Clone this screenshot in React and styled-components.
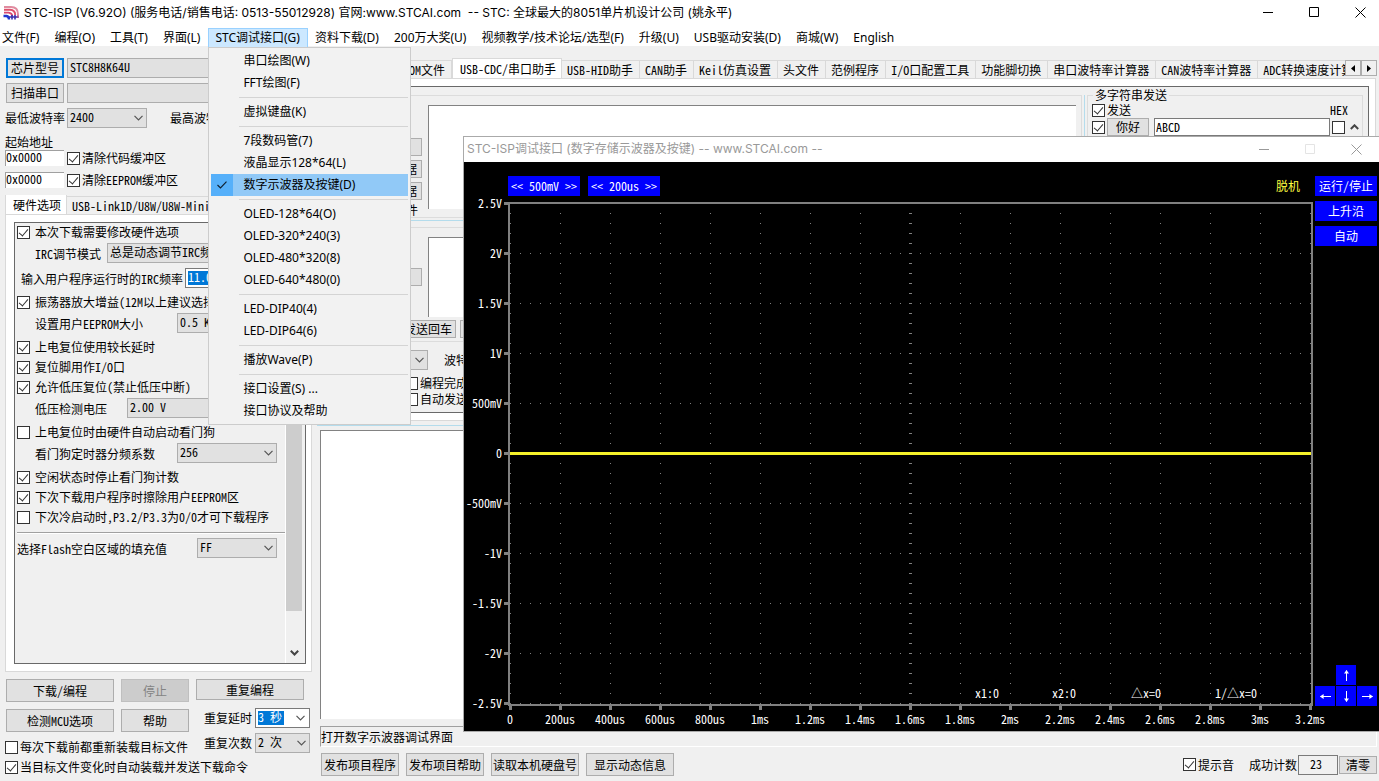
import React from "react";
import styled, { createGlobalStyle, css } from "styled-components";

const MENUS = [
  "文件(F)",
  "编程(O)",
  "工具(T)",
  "界面(L)",
  "STC调试接口(G)",
  "资料下载(D)",
  "200万大奖(U)",
  "视频教学/技术论坛/选型(F)",
  "升级(U)",
  "USB驱动安装(D)",
  "商城(W)",
  "English"
];

const DEBUG_MENU = [
  ["串口绘图(W)", "FFT绘图(F)"],
  ["虚拟键盘(K)"],
  ["7段数码管(7)", "液晶显示128*64(L)", "数字示波器及按键(D)"],
  ["OLED-128*64(O)", "OLED-320*240(3)", "OLED-480*320(8)", "OLED-640*480(0)"],
  ["LED-DIP40(4)", "LED-DIP64(6)"],
  ["播放Wave(P)"],
  ["接口设置(S) ...", "接口协议及帮助"]
];

const TOOL_TABS = [
  "程序文件",
  "EEPROM文件",
  "USB-CDC/串口助手",
  "USB-HID助手",
  "CAN助手",
  "Keil仿真设置",
  "头文件",
  "范例程序",
  "I/O口配置工具",
  "功能脚切换",
  "串口波特率计算器",
  "CAN波特率计算器",
  "ADC转换速度计算器"
];

const VOLTS = ["2.5V", "2V", "1.5V", "1V", "500mV", "0", "-500mV", "-1V", "-1.5V", "-2V", "-2.5V"];

const TIMES = [
  "0", "200us", "400us", "600us", "800us", "1ms", "1.2ms", "1.4ms", "1.6ms",
  "1.8ms", "2ms", "2.2ms", "2.4ms", "2.6ms", "2.8ms", "3ms", "3.2ms"
];

const Check = ({ id, label, checked }) => (
  <CheckLabel htmlFor={id}>
    <CheckInput id={id} type="checkbox" defaultChecked={checked} />
    {label}
  </CheckLabel>
);

const Chevron = () => (
  <ChevronSvg viewBox="0 0 9 6" width="9" height="6" aria-hidden="true">
    <path d="M0.5 0.8 L4.5 4.8 L8.5 0.8" fill="none" stroke="#555" strokeWidth="1.2" />
  </ChevronSvg>
);

const Select = ({ id, value, width, label }) => (
  <SelectBox $width={width}>
    <NativeSelect id={id} defaultValue={value} aria-label={label}>
      <option>{value}</option>
    </NativeSelect>
    <Chevron />
  </SelectBox>
);

const Combo = ({ id, value, width, textWidth }) => (
  <ComboBox $width={width}>
    <MarkedInput id={id} type="text" defaultValue={value} $width={textWidth} />
    <Chevron />
  </ComboBox>
);

const Field = ({ id, label, labelWidth, indent = 20, width, value }) => (
  <FieldRow>
    <FieldLabel htmlFor={id} $width={labelWidth} $indent={indent}>
      {label}
    </FieldLabel>
    <Select id={id} value={value} width={width} />
  </FieldRow>
);

const Logo = () => (
  <svg width="16" height="14" viewBox="0 0 16 14" aria-hidden="true">
    <g fill="none" strokeWidth="1.9">
      <path d="M1 1 H8 Q15 1 15 8 V9" stroke="#e08ca0" />
      <path d="M1 3.8 H7 Q12.2 4 12.2 9" stroke="#e0506c" />
      <path d="M1 6.6 H5.5 Q9 7 9.2 10" stroke="#d84a70" />
      <path d="M0.5 10 H3.5 Q6 10.5 6 13.5" stroke="#2038d0" strokeWidth="2.4" />
      <path d="M9 9 V13.5 M12 9 V13.5 M6 11 H15.5" stroke="#3a2fae" strokeWidth="1.6" />
      <path d="M15 9 V12" stroke="#b04880" strokeWidth="1.4" />
    </g>
  </svg>
);

const WindowButtons = () => (
  <>
    <WindowButton type="button" aria-label="最小化">
      <svg width="11" height="11" viewBox="0 0 11 11">
        <path d="M0 5.5 H10" stroke="currentColor" />
      </svg>
    </WindowButton>
    <WindowButton type="button" aria-label="最大化">
      <svg width="11" height="11" viewBox="0 0 11 11">
        <path d="M0.5 0.5 H9.5 V9.5 H0.5 Z" fill="none" stroke="currentColor" />
      </svg>
    </WindowButton>
    <WindowButton type="button" aria-label="关闭">
      <svg width="11" height="11" viewBox="0 0 11 11">
        <path d="M0.5 0.5 L10.5 10.5 M10.5 0.5 L0.5 10.5" stroke="currentColor" />
      </svg>
    </WindowButton>
  </>
);

const DebugMenu = () => (
  <Dropdown>
    {DEBUG_MENU.map((group, i) => (
      <MenuGroup key={i}>
        {group.map(item => {
          const active = item.startsWith("数字示波器");
          return (
            <MenuItem key={item} type="button" $active={active}>
              <MenuTick $active={active}>
                {active && (
                  <svg width="10" height="8" viewBox="0 0 10 8">
                    <path d="M0.5 4 L3.5 7 L9.5 0.7" fill="none" stroke="#123" strokeWidth="1.2" />
                  </svg>
                )}
              </MenuTick>
              {item}
            </MenuItem>
          );
        })}
      </MenuGroup>
    ))}
  </Dropdown>
);

const Hardware = () => (
  <HardwarePage>
    <Sunken>
      <Options>
        <Check id="modify" label="本次下载需要修改硬件选项" checked />
        <Field id="irc" label="IRC调节模式" labelWidth={92} width={170} value="总是动态调节IRC频率" />
        <FieldRow $gap={5}>
          <FieldLabel htmlFor="freq" $width={170} $indent={6}>
            输入用户程序运行时的IRC频率
          </FieldLabel>
          <Combo id="freq" value="11.0592" width={92} textWidth={42} />
        </FieldRow>
        <OptionGroup>
          <Check id="gain" label="振荡器放大增益(12M以上建议选择)" checked />
        </OptionGroup>
        <Field id="eeprom" label="设置用户EEPROM大小" labelWidth={162} width={100} value="0.5 K" />
        <OptionGroup>
          <Check id="delay" label="上电复位使用较长延时" checked />
          <Check id="reset" label="复位脚用作I/O口" checked />
          <Check id="lowv" label="允许低压复位(禁止低压中断)" checked />
        </OptionGroup>
        <Field id="volt" label="低压检测电压" labelWidth={112} width={150} value="2.00 V" />
        <OptionGroup>
          <Check id="dog" label="上电复位时由硬件自动启动看门狗" />
        </OptionGroup>
        <Field id="div" label="看门狗定时器分频系数" labelWidth={162} width={100} value="256" />
        <OptionGroup>
          <Check id="idle" label="空闲状态时停止看门狗计数" checked />
          <Check id="erase" label="下次下载用户程序时擦除用户EEPROM区" checked />
          <Check id="cold" label="下次冷启动时,P3.2/P3.3为0/0才可下载程序" />
        </OptionGroup>
        <Rule />
        <Field
          id="fill"
          label="选择Flash空白区域的填充值"
          labelWidth={182}
          indent={2}
          width={80}
          value="FF"
        />
      </Options>
      <ScrollBar>
        <ScrollThumb />
        <svg width="9" height="6" viewBox="0 0 9 6" aria-hidden="true">
          <path d="M0.8 0.8 L4.5 4.5 L8.2 0.8" fill="none" stroke="#444" strokeWidth="2" />
        </svg>
      </ScrollBar>
    </Sunken>
  </HardwarePage>
);

const Downloads = () => (
  <DownloadArea>
    <DownloadLeft>
      <ButtonGrid>
        <Button type="button">下载/编程</Button>
        <Button type="button" disabled>停止</Button>
        <Button type="button">检测MCU选项</Button>
        <Button type="button">帮助</Button>
      </ButtonGrid>
      <Check id="reload" label="每次下载前都重新装载目标文件" />
      <Check id="autoload" label="当目标文件变化时自动装载并发送下载命令" checked />
    </DownloadLeft>
    <DownloadRight>
      <RepeatButton type="button">重复编程</RepeatButton>
      <RepeatRow>
        <label htmlFor="wait">重复延时</label>
        <Combo id="wait" value="3 秒" width={55} textWidth={26} />
      </RepeatRow>
      <RepeatRow>
        <label htmlFor="times">重复次数</label>
        <Select id="times" value="2 次" width={55} />
      </RepeatRow>
    </DownloadRight>
  </DownloadArea>
);

const SerialPage = () => (
  <ToolPage>
    <ToolBody>
      <SerialColumn>
        <SerialGroup>
          <SerialActions $top={42}>
            <SmallButton type="button">清空接收区</SmallButton>
            <SmallButton type="button">保存接收数据</SmallButton>
            <SmallButton type="button">复制接收数据</SmallButton>
            <SaveHint>保存到文件</SaveHint>
          </SerialActions>
          <Buffer aria-label="接收缓冲区" $height={104} />
        </SerialGroup>
        <BlueLine />
        <SerialGroup>
          <SerialActions $top={40}>
            <SmallButton type="button">清空发送区</SmallButton>
          </SerialActions>
          <SendArea>
            <Buffer aria-label="发送缓冲区" $height={80} />
          </SendArea>
        </SerialGroup>
        <SendButtons>
          <SmallButton type="button">发送文件</SmallButton>
          <SmallButton type="button">发送回车</SmallButton>
          <SmallButton type="button">发送数据</SmallButton>
        </SendButtons>
        <PortRow>
          <Select id="port" value="COM1" width={80} label="串口" />
          <span>波特率</span>
          <Select id="baud" value="115200" width={80} label="波特率" />
        </PortRow>
        <PortChecks>
          <Check id="opn" label="编程完成" />
          <Check id="snd" label="自动发送" />
        </PortChecks>
      </SerialColumn>
      <BlueDivider />
      <MultiGroup>
        <legend>多字符串发送</legend>
        <MultiHead>
          <Check id="all" label="发送" checked />
          <span>HEX</span>
        </MultiHead>
        <MultiRow>
          <CheckInput type="checkbox" defaultChecked aria-label="选择第1行" />
          <LineButton type="button">你好</LineButton>
          <BlueDivider />
          <LineInput type="text" defaultValue="ABCD" aria-label="字符串1" />
          <CheckInput type="checkbox" aria-label="HEX" />
          <ScrollUp>
            <svg width="9" height="6" viewBox="0 0 9 6" aria-hidden="true">
              <path d="M0.8 5 L4.5 1.3 L8.2 5" fill="none" stroke="#444" strokeWidth="2" />
            </svg>
          </ScrollUp>
        </MultiRow>
      </MultiGroup>
    </ToolBody>
  </ToolPage>
);

const range = n => Array.from({ length: n }, (_, i) => i);

const Plot = () => (
  <PlotSvg viewBox="0 0 850 533" width="850" height="533" role="img" aria-label="波形">
    <g stroke="#808080" strokeWidth="1" shapeRendering="crispEdges">
      {range(17).map(i => (
        <line key={i} x1={46 + i * 50} x2={46 + i * 50} y1="5" y2="506"
          transform="translate(0.5 0)" strokeDasharray="1 9" />
      ))}
      {range(11).map(i => (
        <line key={i} x1="46" x2="847" y1={5.5 + i * 50} y2={5.5 + i * 50} strokeDasharray="1 9" />
      ))}
      <line x1="446.5" x2="446.5" y1="5" y2="506" strokeWidth="3" strokeDasharray="1 9" />
    </g>
    <rect x="45" y="5" width="803" height="502" fill="none" stroke="#808080" strokeWidth="2" />
    {VOLTS.map((v, i) => (
      <g key={v}>
        <rect x="40" y={4 + i * 50} width="5" height="3" fill="#808080" />
        <text x="38" y={10 + i * 50} textAnchor="end">{v}</text>
      </g>
    ))}
    {TIMES.map((t, i) => (
      <g key={t}>
        <rect x={45 + i * 50} y="507" width="3" height="5" fill="#808080" />
        <text x={46 + i * 50} y="526" textAnchor="middle">{t}</text>
      </g>
    ))}
    <rect x="46" y="254" width="801" height="3" fill="#f5f02a" />
    <text x="511" y="500">x1:0</text>
    <text x="588" y="500">x2:0</text>
    <text x="667" y="500">△x=0</text>
    <text x="751" y="500">1/△x=0</text>
  </PlotSvg>
);

const Scope = () => (
  <ScopeWindow>
    <ScopeTitle>
      <h2>STC-ISP调试接口 (数字存储示波器及按键) -- www.STCAI.com --</h2>
      <WindowButtons />
    </ScopeTitle>
    <ScopeBody>
      <ScopeMain>
        <ScopeBar>
          <BlueButton type="button">{"<< 500mV >>"}</BlueButton>
          <BlueButton type="button">{"<< 200us >>"}</BlueButton>
          <Offline>脱机</Offline>
        </ScopeBar>
        <Plot />
      </ScopeMain>
      <ScopeSide>
        <BlueButton type="button">运行/停止</BlueButton>
        <BlueButton type="button">上升沿</BlueButton>
        <BlueButton type="button">自动</BlueButton>
        <Pad>
          <PadButton type="button" aria-label="上" $area="up"><Arrow turn={0} /></PadButton>
          <PadButton type="button" aria-label="左" $area="left"><Arrow turn={270} /></PadButton>
          <PadButton type="button" aria-label="下" $area="down"><Arrow turn={180} /></PadButton>
          <PadButton type="button" aria-label="右" $area="right"><Arrow turn={90} /></PadButton>
        </Pad>
      </ScopeSide>
    </ScopeBody>
  </ScopeWindow>
);

const Arrow = ({ turn }) => (
  <svg width="11" height="11" viewBox="0 0 11 11">
    <g transform={`rotate(${turn} 5.5 5.5)`}>
      <path d="M5.5 0.5 V11" fill="none" stroke="#fff" />
      <path d="M5.5 0 L8 3.6 H3 Z" fill="#fff" />
    </g>
  </svg>
);

const App = () => (
  <Frame>
    <GlobalStyle />
    <TitleBar>
      <Logo />
      <h1>
        STC-ISP (V6.92O) (服务电话/销售电话: 0513-55012928) 官网:www.STCAI.com&nbsp; -- STC:
        全球最大的8051单片机设计公司 (姚永平)
      </h1>
      <WindowButtons />
    </TitleBar>
    <MenuBar>
      {MENUS.map(name => {
        const open = name.startsWith("STC");
        return (
          <MenuSlot key={name}>
            <MenuButton type="button" $open={open}>{name}</MenuButton>
            {open && <DebugMenu />}
          </MenuSlot>
        );
      })}
    </MenuBar>
    <Body>
      <LeftPane>
        <ChipRow>
          <FocusButton type="button">芯片型号</FocusButton>
          <Select value="STC8H8K64U" width={240} label="芯片型号" />
        </ChipRow>
        <ChipRow>
          <ChipButton type="button">扫描串口</ChipButton>
          <Select value="" width={240} label="串口" />
        </ChipRow>
        <BaudRow>
          <label htmlFor="minb">最低波特率</label>
          <Select id="minb" value="2400" width={80} />
          <MaxLabel htmlFor="maxb">最高波特率</MaxLabel>
          <Select id="maxb" value="115200" width={72} />
        </BaudRow>
        <AddressTitle>起始地址</AddressTitle>
        <AddressRow>
          <AddressInput type="text" defaultValue="0x0000" aria-label="代码起始地址" />
          <Check id="clrcode" label="清除代码缓冲区" checked />
        </AddressRow>
        <AddressRow>
          <AddressInput type="text" defaultValue="0x0000" aria-label="EEPROM起始地址" />
          <Check id="clree" label="清除EEPROM缓冲区" checked />
        </AddressRow>
        <LeftTabs>
          <Tab type="button" $active>硬件选项</Tab>
          <Tab type="button">USB-Link1D/U8W/U8W-Mini脱机</Tab>
        </LeftTabs>
        <Hardware />
        <Downloads />
      </LeftPane>
      <RightPane>
        <TabStrip>
          <TabScroll>
            {TOOL_TABS.map(name => (
              <Tab key={name} type="button" $active={name.startsWith("USB-CDC")}>{name}</Tab>
            ))}
          </TabScroll>
          <StripButton type="button" aria-label="向左">
            <svg width="4" height="7" viewBox="0 0 4 7"><path d="M4 0 V7 L0 3.5 Z" /></svg>
          </StripButton>
          <StripButton type="button" aria-label="向右">
            <svg width="4" height="7" viewBox="0 0 4 7"><path d="M0 0 V7 L4 3.5 Z" /></svg>
          </StripButton>
        </TabStrip>
        <SerialPage />
        <BlueLine />
        <Log aria-label="信息" />
        <Status>打开数字示波器调试界面</Status>
        <Footer>
          <FooterButton type="button">发布项目程序</FooterButton>
          <FooterButton type="button">发布项目帮助</FooterButton>
          <FooterButton type="button" $width={88}>读取本机硬盘号</FooterButton>
          <FooterButton type="button" $width={88}>显示动态信息</FooterButton>
          <Counter>
            <Check id="beep" label="提示音" checked />
            <CountLabel htmlFor="count">成功计数</CountLabel>
            <CountInput id="count" type="text" defaultValue="23" />
            <ClearButton type="button">清零</ClearButton>
          </Counter>
        </Footer>
      </RightPane>
    </Body>
    <Scope />
  </Frame>
);

export default App;

const GlobalStyle = createGlobalStyle`
  * {
    box-sizing: border-box;
  }
  body {
    --song: "Noto Sans Mono CJK SC", "Noto Sans CJK SC", monospace;
    --ui: "Noto Sans", "Noto Sans CJK SC", sans-serif;
    --caption: Inter, "Noto Sans CJK SC", sans-serif;
    background: #f0f0f0;
    color: #000;
    font: 12px/16px var(--song);
    margin: 0;
  }
  button, input, select, textarea {
    color: inherit;
    font: inherit;
    margin: 0;
    white-space: nowrap;
  }
  h1, h2 {
    font: 12px/24px var(--caption);
    margin: 0;
    white-space: nowrap;
  }
`;

const Frame = styled.div`
  display: flex;
  flex-direction: column;
  min-height: 100vh;
  overflow: hidden;
  position: relative;
`;

const TitleBar = styled.header`
  align-items: center;
  background: #fff;
  display: flex;
  gap: 8px;
  height: 27px;
  padding: 0 0 2px 3px;
  h1 {
    flex: 1;
    margin-left: -3px;
  }
`;

const WindowButton = styled.button`
  align-items: center;
  background: none;
  border: 0;
  color: inherit;
  display: flex;
  height: 24px;
  justify-content: center;
  padding: 0;
  width: 38px;
`;

const MenuBar = styled.nav`
  background: #fff;
  display: flex;
  font-family: var(--ui);
  height: 19px;
  margin-left: -5px;
  padding-top: 1px;
`;

const MenuSlot = styled.div`
  position: relative;
`;

const MenuButton = styled.button`
  background: ${props => (props.$open ? "#cce8ff" : "none")};
  border: 1px solid ${props => (props.$open ? "#99d1ff" : "transparent")};
  font-family: var(--ui);
  height: 20px;
  padding: 0 7px 0 6px;
`;

const Dropdown = styled.div`
  background: #f2f2f2;
  border: 1px solid #ccc;
  left: 0;
  padding: 2px;
  position: absolute;
  top: 19px;
  width: 203px;
  z-index: 3;
`;

const MenuGroup = styled.div`
  & + &::before {
    background: #d4d4d4;
    content: "";
    display: block;
    height: 1px;
    margin: 3px 0 3px 28px;
  }
`;

const MenuItem = styled.button`
  align-items: center;
  background: ${props => (props.$active ? "#91c9f7" : "none")};
  border: 0;
  display: flex;
  font-family: var(--ui);
  gap: 10px;
  height: 22px;
  padding: 0;
  text-align: left;
  width: 100%;
`;

const MenuTick = styled.span`
  align-items: center;
  align-self: stretch;
  background: ${props => (props.$active ? "#56b0fa" : "none")};
  display: flex;
  justify-content: center;
  width: 22px;
`;

const Body = styled.main`
  display: flex;
  flex: 1;
  padding-top: 12px;
`;

const LeftPane = styled.section`
  display: flex;
  flex-direction: column;
  flex-shrink: 0;
  padding-left: 5px;
  width: 312px;
`;

const Button = styled.button`
  background: #e1e1e1;
  border: 1px solid #adadad;
  height: 23px;
  padding: 0;
  &:disabled {
    background: #ccc;
    border-color: #bfbfbf;
    color: #838383;
  }
`;

const SmallButton = styled(Button)`
  height: 18px;
  line-height: 14px;
`;

const ChipButton = styled(Button)`
  height: 20px;
  width: 58px;
`;

const FocusButton = styled(ChipButton)`
  border: 2px solid #0078d7;
`;

const ChipRow = styled.div`
  display: flex;
  gap: 3px;
  margin-bottom: 5px;
  padding-left: 1px;
`;

const BaudRow = styled.div`
  align-items: center;
  display: flex;
  gap: 2px;
`;

const MaxLabel = styled.label`
  margin-left: 21px;
`;

const AddressTitle = styled.div`
  margin: 6px 0 0;
`;

const AddressRow = styled.div`
  align-items: center;
  display: flex;
  gap: 3px;
  height: 16px;
  & + & {
    margin-top: 6px;
  }
`;

const AddressInput = styled.input`
  background: #fff;
  border: solid #a0a0a0;
  border-width: 1px 0 0 1px;
  height: 16px;
  padding: 0 0 3px;
  width: 59px;
`;

const CheckLabel = styled.label`
  align-items: center;
  display: flex;
  gap: 2px;
  height: 20px;
  white-space: nowrap;
`;

const CheckInput = styled.input`
  appearance: none;
  background: #fff;
  border: 1px solid #333;
  display: grid;
  flex-shrink: 0;
  height: 13px;
  place-items: center;
  width: 13px;
  &:checked::after {
    border: solid #333;
    border-width: 0 1px 1px 0;
    content: "";
    height: 8px;
    margin-bottom: 2px;
    transform: rotate(40deg);
    width: 4px;
  }
`;

const SelectBox = styled.span`
  align-items: center;
  display: grid;
  flex-shrink: 0;
  width: ${props => props.$width}px;
`;

const NativeSelect = styled.select`
  appearance: none;
  background: #e1e1e1;
  border: 1px solid #adadad;
  border-radius: 0;
  grid-area: 1 / 1;
  height: 20px;
  padding: 0 2px 2px;
  width: 100%;
`;

const ChevronSvg = styled.svg`
  grid-area: 1 / 1;
  justify-self: end;
  margin-right: 4px;
  pointer-events: none;
`;

const ComboBox = styled.span`
  align-items: center;
  background: #fff;
  border: 1px solid #7a7a7a;
  display: grid;
  height: 20px;
  padding-left: 2px;
  width: ${props => props.$width}px;
`;

const MarkedInput = styled.input`
  background: #0078d7;
  border: 0;
  color: #fff;
  grid-area: 1 / 1;
  height: 14px;
  padding: 0 0 2px;
  width: ${props => props.$width}px;
`;

const LeftTabs = styled.div`
  align-items: flex-end;
  display: flex;
  height: 19px;
  margin-top: 7px;
  overflow: hidden;
`;

const Tab = styled.button`
  background: #f0f0f0;
  border: solid #d9d9d9;
  border-width: 1px 1px 0 0;
  flex-shrink: 0;
  height: 18px;
  padding: 0 6px 0 5px;
  ${props =>
    props.$active &&
    css`
      background: #fff;
      border-left-width: 1px;
      height: 20px;
      padding: 0 5px 0 7px;
    `}
`;

const HardwarePage = styled.div`
  background: #fff;
  border: 1px solid #d9d9d9;
  display: flex;
  flex: 1;
  padding: 7px 5px 7px 8px;
`;

const Sunken = styled.div`
  background: #f0f0f0;
  border: 1px solid #696969;
  display: flex;
  flex: 1;
  padding-right: 3px;
`;

const Options = styled.div`
  flex: 1;
  margin-top: -1px;
  min-width: 0;
  & > label {
    gap: 5px;
    margin-left: 2px;
  }
`;

const OptionGroup = styled.div`
  margin: 4px 0 0 2px;
  label {
    gap: 5px;
  }
`;

const FieldRow = styled.div`
  align-items: center;
  display: flex;
  height: 20px;
  margin-top: ${props => props.$gap || 1}px;
`;

const FieldLabel = styled.label`
  padding-left: ${props => props.$indent}px;
  padding-top: 2px;
  white-space: nowrap;
  width: ${props => props.$width}px;
`;

const Rule = styled.hr`
  border: solid;
  border-color: #a0a0a0 transparent #fff;
  border-width: 1px 0;
  margin: 5px 0 4px 2px;
`;

const ScrollBar = styled.div`
  align-items: center;
  border-left: 1px solid #fff;
  display: flex;
  flex-direction: column;
  justify-content: space-between;
  padding: 16px 0 7px;
  width: 17px;
`;

const ScrollThumb = styled.div`
  background: #cdcdcd;
  height: 372px;
  width: 16px;
`;

const DownloadArea = styled.div`
  display: flex;
  gap: 7px;
  padding: 7px 0 4px;
`;

const DownloadLeft = styled.div`
  width: 184px;
`;

const ButtonGrid = styled.div`
  display: grid;
  gap: 7px;
  grid-template-columns: 108px 68px;
  margin-bottom: 5px;
  padding-left: 1px;
`;

const DownloadRight = styled.div`
  display: flex;
  flex-direction: column;
  gap: 5px;
`;

const RepeatButton = styled(Button)`
  height: 21px;
  margin-bottom: 3px;
  width: 108px;
`;

const RepeatRow = styled.div`
  align-items: center;
  display: flex;
  gap: 3px;
  padding-left: 8px;
`;

const RightPane = styled.section`
  display: flex;
  flex: 1;
  flex-direction: column;
  min-width: 0;
  padding: 0 2px 5px 5px;
`;

const TabStrip = styled.div`
  display: flex;
  height: 20px;
  padding-left: 3px;
`;

const TabScroll = styled.div`
  align-items: flex-end;
  display: flex;
  flex: 1;
  overflow: hidden;
`;

const StripButton = styled(Button)`
  align-items: center;
  background: #f0f0f0;
  display: flex;
  height: 16px;
  justify-content: center;
  margin-top: 2px;
  width: 16px;
`;

const ToolPage = styled.div`
  background: #fff;
  border: 1px solid #d9d9d9;
  margin-bottom: 4px;
  margin-right: 1px;
  padding: 7px 6px 7px 3px;
`;

const ToolBody = styled.div`
  background: #f0f0f0;
  border: 1px solid #696969;
  display: flex;
  gap: 2px;
  padding: 8px 5px 5px 0;
`;

const SerialColumn = styled.div`
  flex: 1;
  min-width: 0;
`;

const SerialGroup = styled.div`
  border: 1px solid #dcdcdc;
  border-left: 0;
  display: flex;
  gap: 6px;
  margin-bottom: 2px;
  padding: 9px 5px 8px 18px;
`;

const SerialActions = styled.div`
  display: flex;
  flex-direction: column;
  gap: 4px;
  margin-bottom: -10px;
  margin-top: ${props => props.$top - 9}px;
  width: 82px;
`;

const SaveHint = styled.span`
  line-height: 12px;
  padding-right: 4px;
  text-align: right;
`;

const SendArea = styled.div`
  display: flex;
  flex: 1;
  margin-bottom: 16px;
`;

const Buffer = styled.textarea`
  background: #fff;
  border: solid #828282;
  border-width: 1px 0 0 1px;
  flex: 1;
  height: ${props => props.$height}px;
  resize: none;
`;

const BlueLine = styled.div`
  background: #b4dcec;
  height: 1px;
  margin-bottom: 6px;
`;

const BlueDivider = styled.div`
  background: #b4dcec;
  width: 1px;
`;

const SendButtons = styled.div`
  display: flex;
  gap: 4px;
  margin-top: -24px;
  padding-left: 18px;
  button {
    width: 56px;
  }
`;

const PortRow = styled.div`
  align-items: center;
  display: flex;
  gap: 16px;
  padding: 12px 0 5px 26px;
`;

const PortChecks = styled.div`
  padding-left: 83px;
  label {
    height: 16px;
  }
`;

const MultiGroup = styled.fieldset`
  border: 1px solid #dcdcdc;
  margin: -7px 0 0;
  min-width: 0;
  padding: 0 0 0 4px;
  width: 276px;
  legend {
    line-height: 14px;
    margin-left: 1px;
    padding: 0 2px;
  }
`;

const MultiHead = styled.div`
  align-items: center;
  display: flex;
  height: 16px;
  justify-content: space-between;
  padding-right: 14px;
`;

const MultiRow = styled.div`
  align-items: center;
  display: flex;
  gap: 2px;
  height: 18px;
`;

const LineButton = styled(SmallButton)`
  width: 42px;
`;

const LineInput = styled.input`
  background: #fff;
  border: 1px solid #7a7a7a;
  height: 18px;
  padding: 0 1px 2px;
  width: 176px;
`;

const ScrollUp = styled.span`
  background: #f0f0f0;
  display: grid;
  height: 14px;
  place-items: center;
  width: 14px;
`;

const Log = styled.textarea`
  background: #fff;
  border: solid #828282;
  border-width: 1px 0 0 1px;
  flex: 1;
  margin: -2px 1px 7px 3px;
  resize: none;
`;

const Status = styled.div`
  border: 1px solid;
  border-color: #a0a0a0 #fff #fff #a0a0a0;
  height: 21px;
  line-height: 20px;
  margin: 0 0 6px 3px;
`;

const Footer = styled.footer`
  align-items: center;
  display: flex;
  gap: 7px;
  padding-left: 4px;
`;

const FooterButton = styled(Button)`
  width: ${props => props.$width || 78}px;
`;

const Counter = styled.div`
  align-items: center;
  display: flex;
  gap: 1px;
  margin-left: auto;
`;

const CountLabel = styled.label`
  margin-left: 14px;
`;

const CountInput = styled.input`
  background: #f0f0f0;
  border: 1px solid #7a7a7a;
  height: 20px;
  padding: 0 4px 2px 0;
  text-align: center;
  width: 40px;
`;

const ClearButton = styled(SmallButton)`
  width: 38px;
`;

const ScopeWindow = styled.section`
  background: #000;
  border: 1px solid #aaa;
  border-right: 0;
  color: #fff;
  position: absolute;
  right: 0;
  top: 136px;
  z-index: 2;
`;

const ScopeTitle = styled.header`
  background: #fff;
  color: #999;
  display: flex;
  gap: 8px;
  height: 25px;
  padding: 0 4px 0 3px;
  h2 {
    flex: 1;
  }
  button:nth-of-type(2) {
    color: #e4e4e4;
  }
`;

const ScopeBody = styled.div`
  display: flex;
  gap: 1px;
  padding-right: 2px;
`;

const ScopeMain = styled.div`
  width: 850px;
`;

const ScopeBar = styled.div`
  display: flex;
  gap: 8px;
  height: 36px;
  padding: 14px 14px 0 44px;
`;

const BlueButton = styled.button`
  background: #00f;
  border: 0;
  color: #fff;
  height: 20px;
  padding: 0 3px;
`;

const Offline = styled.span`
  color: #ffff40;
  line-height: 20px;
  margin-left: auto;
`;

const PlotSvg = styled.svg`
  display: block;
  fill: #fff;
  font: 12px var(--song);
  overflow: visible;
`;

const ScopeSide = styled.div`
  display: flex;
  flex-direction: column;
  gap: 5px;
  padding: 14px 0 25px;
  width: 62px;
`;

const Pad = styled.div`
  display: grid;
  gap: 1px;
  grid-template-areas: ". up ." "left down right";
  grid-template-columns: repeat(3, 20px);
  margin-top: auto;
`;

const PadButton = styled(BlueButton)`
  display: grid;
  grid-area: ${props => props.$area};
  padding: 0;
  place-items: center;
`;
